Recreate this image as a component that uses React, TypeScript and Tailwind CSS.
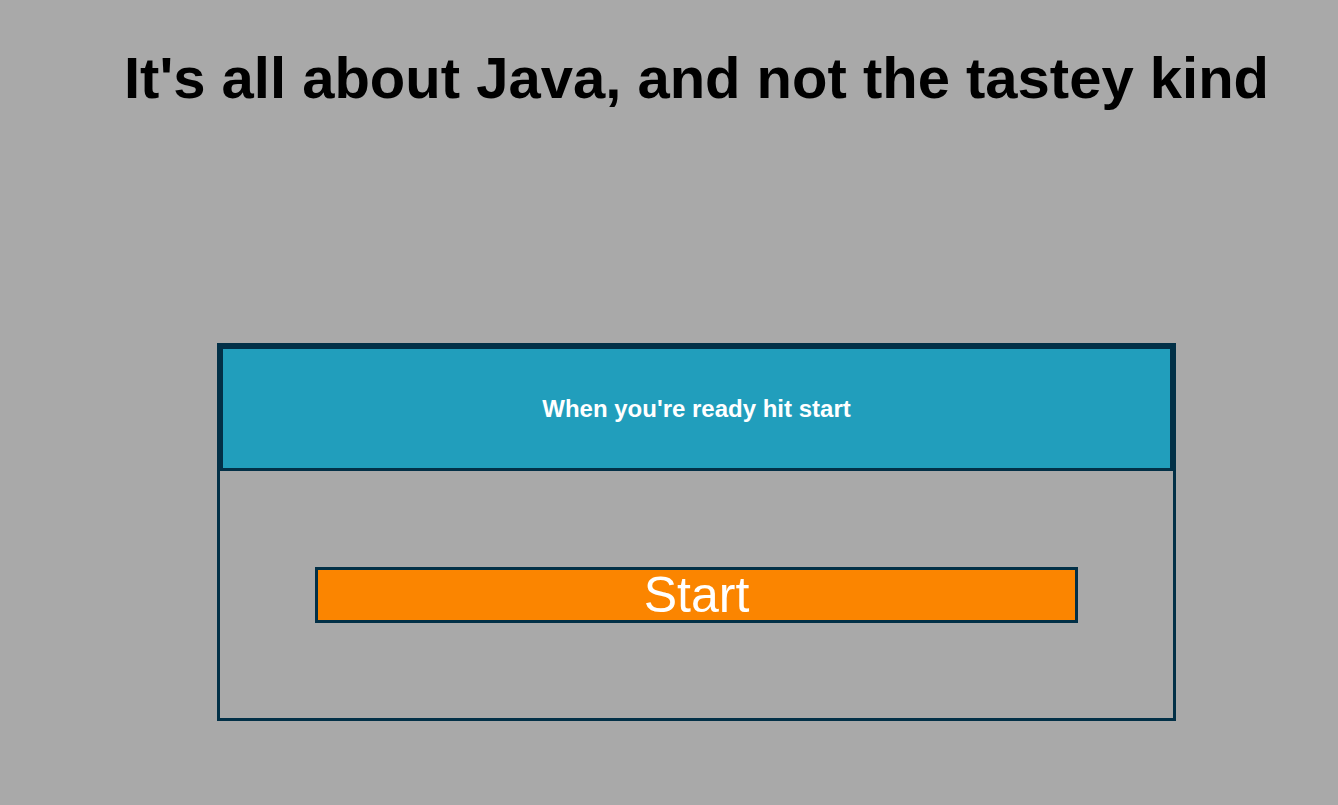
import React from 'react';

export default function App() {
  return (
    <div className="min-h-screen w-full bg-[#a9a9a9] pl-[55px] font-['Liberation_Sans',Arial,sans-serif]">
      <h1 className="pt-[49px] text-center text-[58px] font-bold leading-none text-black">
        It's all about Java, and not the tastey kind
      </h1>

      <div className="mx-auto mt-[236px] flex h-[378px] w-[959px] flex-col border-[3px] border-[#023047]">
        {/* Prompt banner */}
        <div className="flex h-[125px] items-center justify-center border-[3px] border-[#023047] bg-[#219ebc]">
          <p className="text-[24px] font-bold text-white">When you're ready hit start</p>
        </div>

        <div className="flex flex-1 items-center justify-center">
          <button className="flex h-[56px] w-[80%] items-center justify-center border-[3px] border-[#023047] bg-[#fb8500] text-[50px] leading-none text-white">
            Start
          </button>
        </div>
      </div>
    </div>
  );
}
